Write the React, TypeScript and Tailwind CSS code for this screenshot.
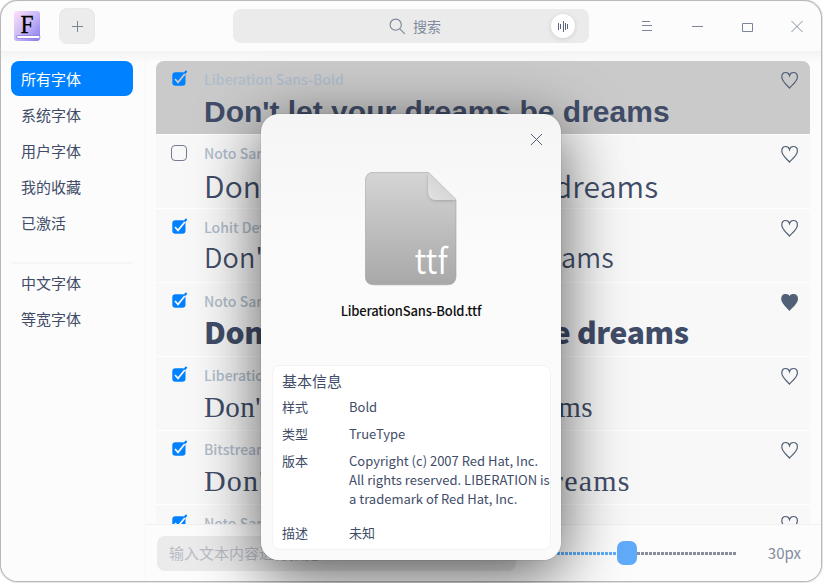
import React from "react";

type FontRow = {
  name: string;
  sample: string;
  checked: boolean;
  favorite?: boolean;
  selected?: boolean;
};

const TEXT = "Don't let your dreams be dreams";

const rows: FontRow[] = [
  { name: "Liberation Sans-Bold", sample: "font-['Liberation_Sans'] font-bold text-[30px] mt-px", checked: true, selected: true },
  { name: "Noto Sans Mono-Regular", sample: "font-['Noto_Sans_CJK_SC'] font-[350] text-[30px] tracking-[0.14px] mt-0", checked: false },
  { name: "Lohit Devanagari-Regular", sample: "font-['Noto_Sans_CJK_SC'] font-[350] text-[27px] tracking-[0.16px] mt-[-2px]", checked: true },
  { name: "Noto Sans CJK-Bold", sample: "font-['Noto_Sans_CJK_SC'] font-black text-[30px] tracking-[-0.35px] mt-[-2px]", checked: true, favorite: true },
  { name: "Liberation Serif-Regular", sample: "font-['Liberation_Serif'] text-[29px] tracking-[0.4px] mt-0", checked: true },
  { name: "Bitstream Charter-Regular", sample: "font-['Liberation_Serif'] text-[30px] tracking-[1.2px] mt-0", checked: true },
  { name: "Noto Sans Sinhala-Regular", sample: "font-['Noto_Sans_CJK_SC'] text-[30px]", checked: true },
];

function Heart({ filled }: { filled?: boolean }) {
  return (
    <svg width="18" height="18" viewBox="0 0 18 18" fill={filled ? "#526077" : "none"} stroke="#526077" strokeWidth="1.2">
      <path d="M8.5 17C6.500 14.6 .8 10.4 .8 6C.8 3.200 2.4 1.500 4.6 1.500C6.500 1.500 8 2.600 8.500 4.500C9 2.600 10.500 1.500 12.400 1.500C14.600 1.500 16.400 3.200 16.400 6C16.400 10.400 10.500 14.6 8.500 17Z" />
    </svg>
  );
}

function Check({ checked, selected }: { checked: boolean; selected?: boolean }) {
  if (!checked) {
    return <span className="mt-[1px] block h-4 w-4 rounded-[4px] border border-[#747d90]" />;
  }
  return (
    <svg width="17" height="17" viewBox="0 0 17 17">
      <rect x="1.3" y="2.3" width="13.2" height="13.5" rx="3.2" fill="#0081ff" />
      <path d="M4 9L7 12.4L14.2 3.5" fill="none" stroke={selected ? "#cacaca" : "#f8f8f8"} strokeWidth="1.7" />
      <path d="M13.3 3.5L15.6 1" stroke="#0081ff" strokeWidth="2" />
    </svg>
  );
}

function Row({ row }: { row: FontRow }) {
  return (
    <div className={"flex h-[74px] shrink-0 border-b border-white pl-[15px] pr-[11px] " + (row.selected ? "rounded-t-lg bg-[#cacaca]" : "bg-[#f8f8f8]")}>
      <div className="w-[33px] shrink-0 pt-[9px]">
        <Check checked={row.checked} selected={row.selected} />
      </div>
      <div className="min-w-0 flex-1 whitespace-nowrap">
        <div className="pt-[8px] text-[14px] font-medium leading-[20px] text-[#b0bdcb]">{row.name}</div>
        <div className={"leading-[44px] text-[#414d68] " + row.sample}>{TEXT}</div>
      </div>
      <div className="pt-[10px]">
        <Heart filled={row.favorite} />
      </div>
    </div>
  );
}

const navTop = ["所有字体", "系统字体", "用户字体", "我的收藏", "已激活"];
const navBottom = ["中文字体", "等宽字体"];

function NavItem({ label, active }: { label: string; active?: boolean }) {
  return (
    <div className={"mb-px flex h-[35px] items-center rounded-lg pl-[10px] pt-px text-[15px] " + (active ? "bg-[#0081ff] text-white" : "text-[#414d68]")}>
      {label}
    </div>
  );
}

function Header() {
  return (
    <header className="flex h-[50px] shrink-0 items-center pl-[12px]">
      <svg className="shrink-0" width="28" height="32" viewBox="0 0 28 32">
        <defs>
          <linearGradient id="logo" x1="0" y1="0" x2="1" y2="1">
            <stop offset="0" stopColor="#ffe0fa" />
            <stop offset=".5" stopColor="#c8b8f7" />
            <stop offset="1" stopColor="#8879ee" />
          </linearGradient>
        </defs>
        <rect x="1" y="1" width="26" height="30" rx="3" fill="url(#logo)" />
        <rect x="3.500" y="25.500" width="23.500" height="3" rx="1.5" fill="#fff" stroke="#8c72dc" strokeWidth=".8" />
        <text x="14" y="23" textAnchor="middle" fontFamily="Liberation Serif, serif" fontSize="25" stroke="#000" strokeWidth=".3" textLength="13" lengthAdjust="spacingAndGlyphs" fill="#000">F</text>
      </svg>
      <button className="ml-[18px] flex h-9 w-9 shrink-0 items-center justify-center rounded-lg border border-[#e8e8e8] bg-[#ececec]">
        <svg width="12" height="12" viewBox="0 0 12 12" stroke="#7c8498" className="ml-px"><path d="M0 6.5H11M5.5 1V12" /></svg>
      </button>
      <div className="ml-[138px] flex h-[34px] w-[356px] shrink-0 items-center rounded-lg bg-[#ebebeb] pl-[156px] text-[14px] text-[#828a9f]">
        <svg width="17" height="17" viewBox="0 0 17 17" fill="none" stroke="#7c8498" strokeWidth="1.1">
          <circle cx="6.7" cy="6.7" r="5.6" />
          <path d="M10.8 10.8L15.8 15.8" />
        </svg>
        <span className="ml-[7px] flex-1">搜索</span>
        <span className="mr-[14px] flex h-6 w-6 items-center justify-center rounded-full bg-white shadow-[0_1px_5px_rgba(0,0,0,0.12)]">
          <svg width="12" height="12" viewBox="0 0 12 12" stroke="#59657d" strokeWidth="1">
            <path d="M1.5 3V10M3.5 4V9M6.5 1V12M8.500 3V10M10.500 4V9" />
          </svg>
        </span>
      </div>
      <div className="ml-[52px] flex items-center gap-[38px] text-[#7c8498]">
        <svg width="12" height="12" viewBox="0 0 12 12" stroke="currentColor"><path d="M1 1.5H9M1 5.5H11M1 10.5H11" /></svg>
        <svg width="12" height="12" viewBox="0 0 12 12" stroke="currentColor"><path d="M1 6.5H12" /></svg>
        <svg width="12" height="12" viewBox="0 0 12 12" stroke="currentColor" fill="none"><path d="M1.5 3.5H11.5V11.5H1.5Z" /></svg>
        <svg width="13" height="13" viewBox="0 0 13 13" stroke="currentColor" strokeWidth=".9"><path d="M.5 1L11.5 12M11.5 1L.5 12" /></svg>
      </div>
    </header>
  );
}

function Footer() {
  return (
    <footer className="flex h-[57px] shrink-0 items-center border-t border-[#f0f0f0] bg-[#fcfcfc] pl-[11px] pr-[20px]">
      <div className="flex h-[35px] w-[359px] items-center rounded-lg bg-[#ebebeb] pl-[12px] text-[15px] text-[#b9bcc6]">输入文本内容进行预览</div>
      <div className="ml-[29px] flex h-6 flex-1 items-center">
        <div className="h-[3px] w-[72px] bg-[repeating-linear-gradient(90deg,#5fadf8_0_3px,transparent_3px_4px)]" />
        <div className="h-6 w-5 shrink-0 rounded-[7px] bg-[#61acfa]" />
        <div className="h-[3px] w-[99px] bg-[repeating-linear-gradient(90deg,#888e9e_0_3px,transparent_3px_4px)]" />
      </div>
      <span className="pt-px text-[15px] text-[#828a9f]">30px</span>
    </footer>
  );
}

function FileIcon() {
  return (
    <svg width="92" height="114" viewBox="0 0 92 114">
      <defs>
        <linearGradient id="page" x1="0" y1="0" x2="0" y2="1">
          <stop offset="0" stopColor="#d5d5d5" />
          <stop offset="1" stopColor="#a8a8a8" />
        </linearGradient>
        <linearGradient id="fold" x1="0" y1="1" x2=".6" y2=".4">
          <stop offset="0" stopColor="#e2e2e2" />
          <stop offset="1" stopColor="#d4d4d4" />
        </linearGradient>
        <filter id="foldShadow" x="-30%" y="-30%" width="160%" height="160%">
          <feDropShadow dx="0" dy="1" stdDeviation="1.5" floodOpacity=".2" />
        </filter>
        <clipPath id="pageClip">
          <path d="M9 .3H63.500L91 27.500V104Q91 112.800 82 112.800H9Q.3 112.800 .3 104V9.500Q.3 .3 9 .3Z" />
        </clipPath>
      </defs>
      <path d="M9 .3H63.500L91 27.500V104Q91 112.800 82 112.800H9Q.3 112.800 .3 104V9.500Q.3 .3 9 .3Z" fill="url(#page)" stroke="#a0a0a0" strokeWidth=".6" />
      <g clipPath="url(#pageClip)">
        <path d="M63 0L91.500 28H72Q63 28 63 19.500Z" fill="url(#fold)" filter="url(#foldShadow)" />
      </g>
      <text x="49.500" y="102" fill="#fff" fontFamily="Noto Sans CJK SC, sans-serif" fontWeight="350" fontSize="35" textLength="33" lengthAdjust="spacingAndGlyphs">ttf</text>
    </svg>
  );
}

const info: [string, string[]][] = [
  ["样式", ["Bold"]],
  ["类型", ["TrueType"]],
  ["版本", ["Copyright (c) 2007 Red Hat, Inc.", "All rights reserved. LIBERATION is", "a trademark of Red Hat, Inc."]],
];

function InfoRow({ label, lines }: { label: string; lines: string[] }) {
  return (
    <div className="flex">
      <span className="w-[67px] shrink-0">{label}</span>
      <div className="whitespace-nowrap">
        {lines.map((l) => (
          <div key={l}>{l}</div>
        ))}
      </div>
    </div>
  );
}

function Dialog() {
  return (
    <div className="absolute left-[261px] top-[114px] flex h-[446px] w-[300px] flex-col rounded-[18px] bg-linear-to-b from-[#f5f5f5] via-[#fbfbfb] via-30% to-[#fafafa] shadow-[0_0_1px_rgba(0,0,0,0.5),0_15px_65px_rgba(0,0,0,0.65)]">
      <div className="flex h-[58px] shrink-0 justify-end pr-[18px] pt-[19px]">
        <svg width="13" height="13" viewBox="0 0 13 13" stroke="#414d68" strokeWidth=".9"><path d="M1 1L12 12M12 1L1 12" /></svg>
      </div>
      <div className="flex justify-center"><FileIcon /></div>
      <div className="mt-[15px] text-center text-[13px] font-medium leading-[20px] tracking-[-0.17px] text-[#101010]">LiberationSans-Bold.ttf</div>
      <div className="ml-[11px] mt-[44px] h-[185px] w-[279px] rounded-lg border border-[#f3f3f3] bg-white pl-[9px] pt-[4px] text-[13px] leading-[19px] text-[#414d68]">
        <div className="mb-[5px] text-[15px] leading-[22px]">基本信息</div>
        <div className="flex flex-col gap-2">
          {info.map(([label, lines]) => (
            <InfoRow key={label} label={label} lines={lines} />
          ))}
        </div>
        <div className="mt-[15px]"><InfoRow label="描述" lines={["未知"]} /></div>
      </div>
    </div>
  );
}

export default function App() {
  return (
    <div className="relative flex h-[583px] w-[823px] overflow-hidden bg-white pb-px pr-px font-['Noto_Sans_CJK_SC',sans-serif]">
      <div className="flex flex-1 flex-col overflow-hidden rounded-[18px] border border-[#b9b9b9] bg-[#fcfcfc] shadow-[0_0_2px_rgba(0,0,0,0.4)]">
        <Header />
        <div className="flex min-h-0 flex-1 bg-linear-to-b from-[#f3f3f3] to-[#fcfcfc] to-[12px]">
          <nav className="w-[145px] shrink-0 border-r border-[#f7f7f7] pl-[10px] pr-[12px] pt-[10px]">
            {navTop.map((l, i) => <NavItem key={l} label={l} active={i === 0} />)}
            <div className="mb-px mt-[22px] h-[2px] bg-[#f6f6f6]" />
            {navBottom.map((l) => <NavItem key={l} label={l} />)}
          </nav>
          <main className="flex min-w-0 flex-1 flex-col">
            <div className="flex min-h-0 flex-1 flex-col overflow-hidden pl-[10px] pr-[11px] pt-[10px]">
              {rows.map((r) => <Row key={r.name} row={r} />)}
            </div>
            <Footer />
          </main>
        </div>
      </div>
      <Dialog />
    </div>
  );
}
